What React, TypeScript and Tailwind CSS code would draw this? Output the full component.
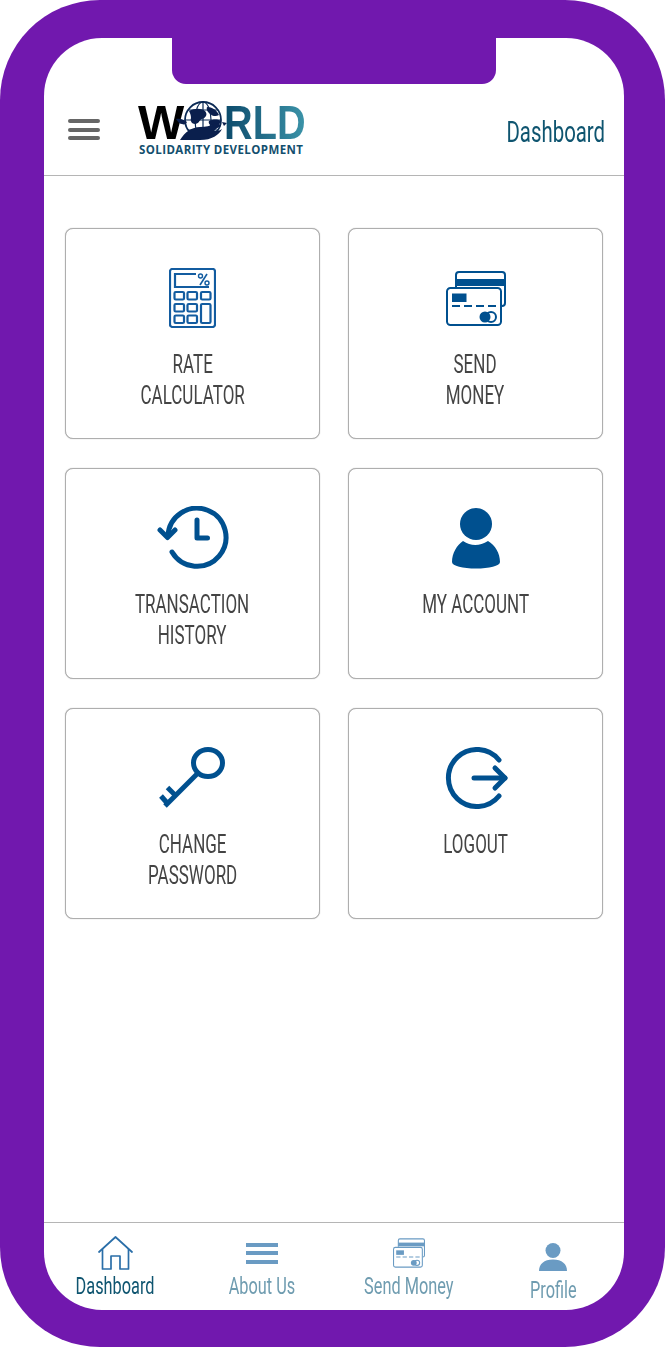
import type { ReactNode } from 'react';

const cardIcon = 'text-[#00508f]';

function CalculatorIcon() {
  return (
    <svg className="text-[#135ca0]" width="47" height="60" viewBox="0 0 47 60" fill="none" stroke="currentColor" strokeWidth="2.200">
      <rect x="1" y="1" width="45" height="58" rx="2.500" />
      <path d="M27 6H6v13h34" />
      <path d="M31 17 38 6" strokeWidth="1.600" />
      <circle cx="31.500" cy="8" r="2" strokeWidth="1.400" />
      <circle cx="38" cy="15" r="2" strokeWidth="1.400" />
      <rect x="5.500" y="24" width="9.500" height="7.500" rx="1.200" />
      <rect x="18.500" y="24" width="9.500" height="7.500" rx="1.200" />
      <rect x="32" y="24" width="9.500" height="7.500" rx="1.200" />
      <rect x="5.500" y="36" width="9.500" height="7.500" rx="1.200" />
      <rect x="18.500" y="36" width="9.500" height="7.500" rx="1.200" />
      <rect x="5.500" y="47.500" width="9.500" height="7.500" rx="1.200" />
      <rect x="18.500" y="47.500" width="9.500" height="7.500" rx="1.200" />
      <rect x="32" y="36" width="9.500" height="19" rx="1.200" />
    </svg>
  );
}

function CardsIcon({ className = cardIcon, width = 60, height = 55 }: { className?: string; width?: number; height?: number }) {
  return (
    <svg className={className} width={width} height={height} viewBox="0 0 60 55" fill="none" stroke="currentColor" strokeWidth="2">
      <path d="M10 16V4a3 3 0 0 1 3-3h43a3 3 0 0 1 3 3v28a3 3 0 0 1-3 3" />
      <rect x="10" y="8" width="49" height="7" fill="currentColor" stroke="none" />
      <rect x="1" y="17" width="54" height="37" rx="3.500" fill="white" />
      <rect x="6" y="22.500" width="14.500" height="8.500" fill="currentColor" stroke="none" />
      <path d="M6 35h45" strokeDasharray="8 4" />
      <circle cx="45" cy="46" r="5" />
      <circle cx="39" cy="46" r="5.500" fill="currentColor" stroke="none" />
    </svg>
  );
}

function HistoryIcon() {
  return (
    <svg className={cardIcon} width="72" height="64" viewBox="0 0 72 64" fill="none" stroke="currentColor" strokeWidth="5" strokeLinecap="round" strokeLinejoin="round">
      <path d="M15 46A29 29 0 1 0 11 30" />
      <path d="M3 24l7.500 7.500L18 24" />
      <path d="M40 14v18h10.500" />
    </svg>
  );
}

function PersonIcon() {
  return (
    <svg className={cardIcon} width="50" height="61" viewBox="0 0 50 61" fill="currentColor">
      <circle cx="25" cy="16" r="16" />
      <path d="M12 33Q24 41 37 33C44 37 49 45 49 54 49 58 38 60.500 25 60.500 12 60.500 1 58 1 54 1 45 6 37 12 33Z" />
    </svg>
  );
}

function ProfileIcon() {
  return (
    <svg className="mt-[7px] text-[#6a9bc3]" width="28" height="28" viewBox="0 0 28 28" fill="currentColor">
      <circle cx="14" cy="7.500" r="7.500" />
      <path d="M0 28C0 21 5 16.500 14 16.500S28 21 28 28Z" />
    </svg>
  );
}

function KeyIcon() {
  return (
    <svg className={cardIcon} width="67" height="64" viewBox="0 0 67 64" fill="none" stroke="currentColor" strokeWidth="5">
      <ellipse cx="49" cy="17" rx="14.500" ry="13.500" />
      <path d="M38 28 6 60" />
      <path d="M17 50 8.500 41.500" />
      <path d="M9 58 2 50" />
    </svg>
  );
}

function LogoutIcon() {
  return (
    <svg className={`ml-[3px] ${cardIcon}`} width="65" height="62" viewBox="0 0 65 62" fill="none" stroke="currentColor" strokeWidth="5" strokeLinecap="round" strokeLinejoin="round">
      <path d="M54 13A28.500 28.500 0 1 0 54 49" />
      <path d="M29 31h31" />
      <path d="M50 21l10 10-10 10" />
    </svg>
  );
}

function HomeIcon() {
  return (
    <svg className="text-[#2a6ea8]" width="35" height="34" viewBox="0 0 35 34" fill="none" stroke="currentColor" strokeWidth="1.700" strokeLinejoin="round" strokeLinecap="round">
      <path d="M1 16 17.500 1 34 16" />
      <path d="M4.500 13.500V33h8.500V20h9v13h8.500V13.500" />
    </svg>
  );
}

function Globe() {
  return (
    <svg className="-mx-[5px] -mt-[2px] shrink-0" width="54" height="40" viewBox="0 0 54 40" fill="none">
      <circle cx="27" cy="19" r="18" fill="white" stroke="#0b2a55" strokeWidth="1.800" />
      <ellipse cx="27" cy="19" rx="8" ry="18" stroke="#0b2a55" strokeWidth="1.200" />
      <path d="M9 19h36M12 9h30M12 29h30M27 1v36" stroke="#0b2a55" strokeWidth="1.200" />
      <path d="M13 10c6-3 12-3 16 0 3 3 1 7-3 8-3 1-3 5-7 5-3 0-5-3-4-6 0-3-1-5-2-7Z" fill="#0a1f4d" />
      <path d="M31 6c5 0 10 3 12 8-3 2-7 1-9-1-2-2-4-4-3-7ZM33 20c4-2 9-2 12 0-1 4-5 6-8 5-3 0-5-3-4-5Z" fill="#0a1f4d" />
      <path d="M0 18c5-1 8 1 11 3-1 2-3 3-5 2-2 0-4-2-6-5ZM4 39c5-8 12-13 20-13 6 0 10-1 14-3 3-1 6 0 7 2-3 1-5 3-7 5 3 0 5 0 8-2-3 6-10 11-22 11Z" fill="#0a1f4d" />
      <path d="M46 21l5 1-3 3Z" fill="#0a1f4d" />
    </svg>
  );
}

function Logo() {
  return (
    <div className="flex flex-col ml-[38px] mt-[1px]">
      <div className="flex items-center h-[36px] font-['Liberation_Sans',sans-serif] font-bold text-[49px] leading-[36px]">
        <span className="w-[43px] text-black -tracking-[1px]">W</span>
        <Globe />
        <span className="w-[100px] -mr-[21px] -ml-[1px] inline-block origin-left scale-x-[.81] whitespace-nowrap bg-linear-to-r from-[#0b4a6b] to-[#3b93a8] bg-clip-text text-transparent">RLD</span>
      </div>
      <span className="mt-[3px] pl-[1px] whitespace-nowrap font-['Open_Sans',sans-serif] font-bold text-[11.500px] leading-[14px] tracking-[.4px] text-[#134f6e]">SOLIDARITY DEVELOPMENT</span>
    </div>
  );
}

function Label({ children, className }: { children: ReactNode; className: string }) {
  return <span className={`inline-block whitespace-nowrap text-center scale-x-[.68] ${className}`}>{children}</span>;
}

function MenuCard({ icon, lines }: { icon: ReactNode; lines: string[] }) {
  return (
    <button className="flex flex-col items-center h-[211px] pt-[34px] bg-white border border-[#aeaeae] shadow-[0_0_1px_#a0a0a0] rounded-lg">
      <div className="flex items-center justify-center h-[70px]">{icon}</div>
      <Label className="mt-[16px] text-[25px] leading-[31px] text-[#444444]">
        {lines.map((line) => (
          <span key={line} className="block">{line}</span>
        ))}
      </Label>
    </button>
  );
}

function NavItem({ icon, label, active, offset }: { icon: ReactNode; label: string; active?: boolean; offset?: boolean }) {
  return (
    <div className="flex flex-col items-center">
      <div className="flex items-center justify-center h-[34px]">{icon}</div>
      <Label className={`text-[24px] leading-[30px] ${offset ? 'mt-[5px]' : 'mt-[1px]'} ${active ? 'text-[#0f5570]' : 'text-[#6f9cb0]'}`}>{label}</Label>
    </div>
  );
}

export default function App() {
  return (
    <div className="w-[665px] h-[1347px] pt-[38px] pb-[37px] pl-[44px] pr-[41px] rounded-[100px] bg-[#7118ae] font-['Roboto',sans-serif] font-normal">
      <div className="flex flex-col h-full rounded-[58px] bg-white overflow-hidden">
        {/* Notch */}
        <div className="shrink-0 mx-auto w-[324px] h-[46px] rounded-b-[14px] bg-[#7118ae]" />

        {/* Header */}
        <header className="shrink-0 flex items-center h-[92px] pl-[24px] pr-[19px] border-b border-[#b5b5b5]">
          <div className="flex flex-col gap-[4.500px] w-[32px] blur-[.6px]">
            <div className="h-[4px] rounded-full bg-[#666666]" />
            <div className="h-[4px] rounded-full bg-[#666666]" />
            <div className="h-[4px] rounded-full bg-[#666666]" />
          </div>
          <Logo />
          <div className="flex-1 pt-[4px] text-right">
            <Label className="origin-right text-[30px] leading-[36px] text-[#0f5570]">Dashboard</Label>
          </div>
        </header>

        {/* Menu */}
        <main className="flex-1 pt-[52px] pl-[21px]">
          <div className="grid grid-cols-[255px_255px] gap-x-[28px] gap-y-[29px]">
            <MenuCard icon={<CalculatorIcon />} lines={['RATE', 'CALCULATOR']} />
            <MenuCard icon={<CardsIcon />} lines={['SEND', 'MONEY']} />
            <MenuCard icon={<HistoryIcon />} lines={['TRANSACTION', 'HISTORY']} />
            <MenuCard icon={<PersonIcon />} lines={['MY ACCOUNT']} />
            <MenuCard icon={<KeyIcon />} lines={['CHANGE', 'PASSWORD']} />
            <MenuCard icon={<LogoutIcon />} lines={['LOGOUT']} />
          </div>
        </main>

        {/* Bottom nav */}
        <nav className="shrink-0 grid grid-cols-[143px_149px_146px_142px] h-[88px] pt-[13px] border-t border-[#b5b5b5]">
          <NavItem active icon={<HomeIcon />} label="Dashboard" />
          <NavItem
            icon={
              <div className="flex flex-col gap-[4.500px] w-[32px]">
                <div className="h-[4px] bg-[#6a9bc3]" />
                <div className="h-[4px] bg-[#6a9bc3]" />
                <div className="h-[4px] bg-[#6a9bc3]" />
              </div>
            }
            label="About Us"
          />
          <NavItem icon={<CardsIcon className="text-[#6a9bc3]" width={32} height={30} />} label="Send Money" />
          <NavItem offset icon={<ProfileIcon />} label="Profile" />
        </nav>
      </div>
    </div>
  );
}
